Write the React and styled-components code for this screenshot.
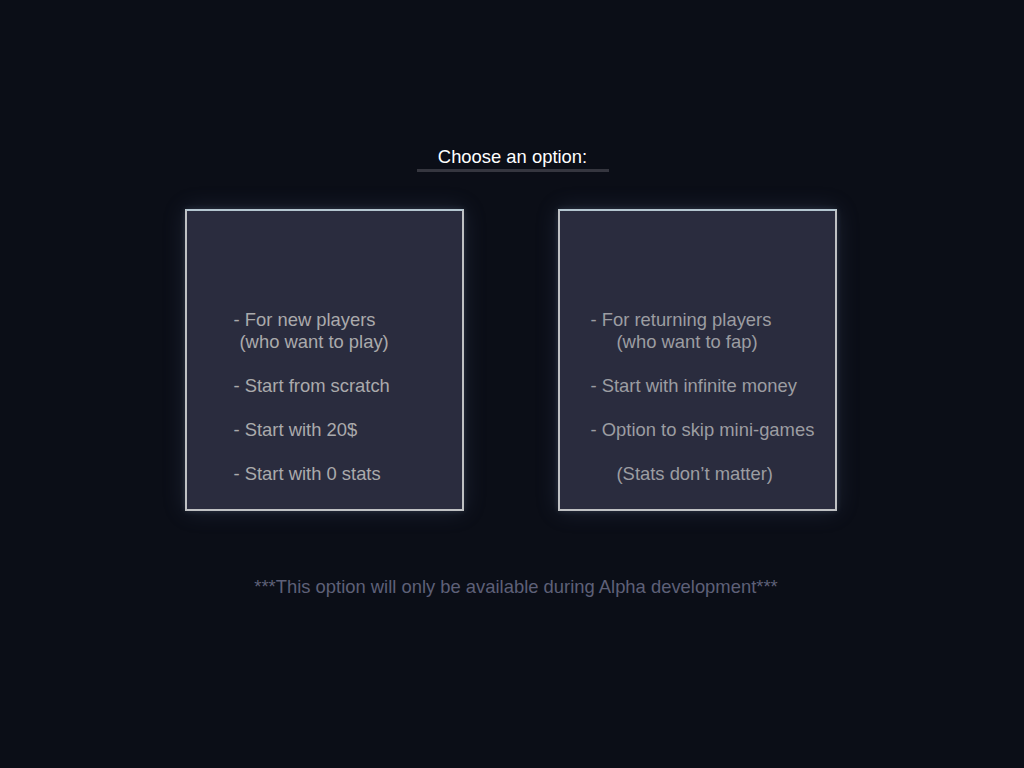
import styled, { createGlobalStyle } from 'styled-components'

const GlobalStyle = createGlobalStyle`
  html, body {
    margin: 0;
    padding: 0;
    background: #0b0e17;
  }
  body {
    font-family: "Liberation Sans", Arial, sans-serif;
  }
`

const options = [
  {
    id: 'new',
    padLeft: 47,
    color: '#aaaaac',
    groups: [
      [{ text: '- For new players' }, { text: '(who want to play)', indent: 6 }],
      [{ text: '- Start from scratch' }],
      [{ text: '- Start with 20$' }],
      [{ text: '- Start with 0 stats' }],
    ],
  },
  {
    id: 'returning',
    padLeft: 31,
    color: '#9c9da2',
    groups: [
      [{ text: '- For returning players' }, { text: '(who want to fap)', indent: 26 }],
      [{ text: '- Start with infinite money' }],
      [{ text: '- Option to skip mini-games' }],
      [{ text: '(Stats don’t matter)', indent: 26 }],
    ],
  },
]

const App = () => {
  return (
    <Page>
      <GlobalStyle />
      <Title>Choose an option:</Title>
      <Cards>
        {options.map(option => (
          <Card key={option.id} $padLeft={option.padLeft} $color={option.color}>
            {option.groups.map((group, i) => (
              <Group key={i}>
                {group.map(line => (
                  <Line key={line.text} $indent={line.indent || 0}>{line.text}</Line>
                ))}
              </Group>
            ))}
          </Card>
        ))}
      </Cards>
      <Notice>***This option will only be available during Alpha development***</Notice>
    </Page>
  )
}

const Page = styled.div`
  display: flex;
  flex-direction: column;
  align-items: center;

  width: 1024px;
  height: 768px;
  padding-top: 146px;
  box-sizing: border-box;
  background: #0b0e17;
`

const Title = styled.div`
  width: 192px;
  margin-left: 1px;
  padding-bottom: 1px;
  border-bottom: 3px solid #35363f;

  color: #ffffff;
  font-size: 18.4px;
  line-height: 22px;
  text-align: center;
`

const Cards = styled.div`
  display: flex;
  justify-content: center;
  gap: 94px;

  margin-top: 37px;
  margin-left: -3px;
`

const Card = styled.div`
  display: flex;
  flex-direction: column;
  gap: 22px;

  width: 279px;
  height: 302px;
  box-sizing: border-box;
  padding: 98px 0 0 ${props => props.$padLeft}px;

  background: #2a2c3e;
  border: 2px solid #bfc1c3;
  border-top-color: #b4c6d0;
  box-shadow: 0 0 22px rgba(110, 130, 170, 0.18), 0 0 6px rgba(150, 170, 200, 0.2);

  color: ${props => props.$color};
`

const Group = styled.div`
  display: flex;
  flex-direction: column;
`

const Line = styled.div`
  padding-left: ${props => props.$indent}px;

  font-size: 18.4px;
  line-height: 22px;
  white-space: nowrap;
`

const Notice = styled.div`
  margin-top: 65px;
  margin-left: 8px;

  color: #5e6078;
  font-size: 18.4px;
  line-height: 22px;
`

export default App
